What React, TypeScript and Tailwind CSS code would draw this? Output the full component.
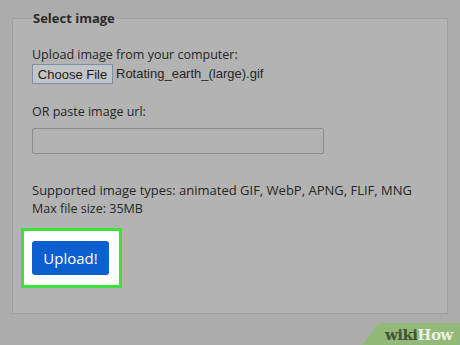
export default function App() {
  return (
    <div className="relative h-[345px] w-[460px] overflow-hidden bg-[#acacac] px-[12px] pt-[10px] font-['Open_Sans',sans-serif] text-[12.5px] text-[#262626]">
      <fieldset className="h-[304px] w-[436px] border border-[#a0a0a0] bg-[#b3b3b3] pl-[19px]">
        <legend className="px-[1px] text-[13px] font-bold leading-[16px] text-[#2a2a2a]">
          Select image
        </legend>

        <p className="mt-[20px] leading-[18px]">Upload image from your computer:</p>
        <div className="flex items-center gap-[3px] font-['Liberation_Sans',sans-serif]">
          <button className="h-[20px] w-[81px] border border-[#7d8fa0] bg-[#c2c4c7] text-[13px] text-[#1e1e1e]">
            Choose File
          </button>
          <span className="text-[13px]">Rotating_earth_(large).gif</span>
        </div>

        <p className="mt-[19px] leading-[18px]">OR paste image url:</p>
        <input
          type="text"
          className="mt-[7px] block h-[26px] w-[292px] rounded-[2px] border border-[#8d8d8d] bg-[#b3b3b3] outline-none"
        />

        <p className="mt-[27px] text-[13px] leading-[18px]">
          Supported image types: animated GIF, WebP, APNG, FLIF, MNG
          <br />
          <span className="text-[12.5px]">Max file size: 35MB</span>
        </p>

        <div className="ml-[-11px] mt-[10px] w-[101px] border-[3px] border-[#3ae23a] bg-white px-[8px] py-[10px]">
          <button className="h-[34px] w-[77px] rounded-[3px] bg-[#0b5fcf] text-[15px] text-white">
            Upload!
          </button>
        </div>
      </fieldset>

      <div className="absolute bottom-0 right-0 h-[22px] w-[100px]">
        <svg className="absolute inset-0" width="100" height="22" viewBox="0 0 100 22">
          <path d="M2 22 L16 3 Q18 0 23 0 L100 0 L100 22 Z" fill="#93b978" />
        </svg>
        <span className="relative ml-[25px] mt-[3px] block font-['DejaVu_Serif',serif] text-[15px] font-bold leading-[18px] tracking-[-0.6px]">
          <span className="text-[#43513a]">wiki</span>
          <span className="text-[#eaf0e3]">How</span>
        </span>
      </div>
    </div>
  );
}
